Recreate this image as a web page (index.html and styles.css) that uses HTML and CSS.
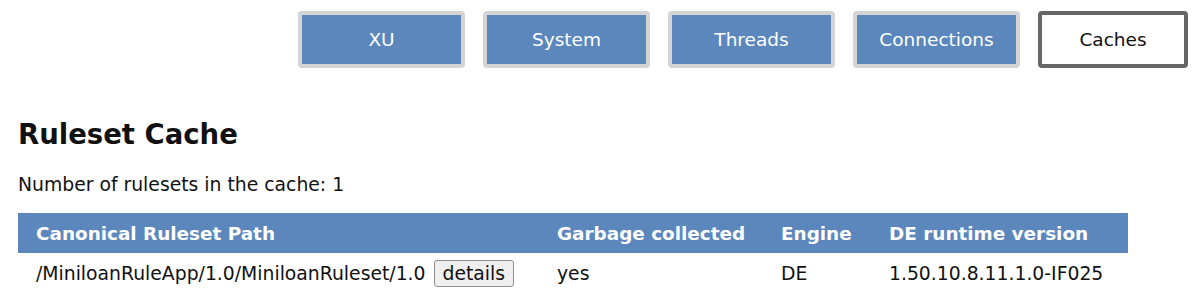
FILE: index.html
```html
<!DOCTYPE html>
<html lang="en">
<head>
  <meta charset="UTF-8">
  <title>Caches</title>
  <link rel="stylesheet" href="styles.css">
</head>
<body>

  <!-- Top tabs -->
  <div class="tabs">
    <a class="tab" href="#">XU</a>
    <a class="tab" href="#">System</a>
    <a class="tab" href="#">Threads</a>
    <a class="tab" href="#">Connections</a>
    <a class="tab active" href="#">Caches</a>
  </div>

  <h2>Ruleset Cache</h2>
  <p class="count">Number of rulesets in the cache: 1</p>

  <table class="cache">
    <thead>
      <tr>
        <th class="col-path">Canonical Ruleset Path</th>
        <th class="col-gc">Garbage collected</th>
        <th class="col-engine">Engine</th>
        <th class="col-version">DE runtime version</th>
      </tr>
    </thead>
    <tbody>
      <tr>
        <td>/MiniloanRuleApp/1.0/MiniloanRuleset/1.0 <button class="details">details</button></td>
        <td>yes</td>
        <td>DE</td>
        <td>1.50.10.8.11.1.0-IF025</td>
      </tr>
    </tbody>
  </table>

</body>
</html>
```

FILE: styles.css
```css
body {
  font-family: 'DejaVu Sans', Verdana, sans-serif;
  margin: 0;
  padding: 0 18px;
  color: #111;
  background: #fff;
}
.tabs {
  display: flex;
  justify-content: flex-end;
  gap: 18px;
  padding-top: 11px;
  margin-right: -6px;
}
.tab {
  box-sizing: border-box;
  width: 167px;
  height: 57px;
  display: flex;
  align-items: center;
  justify-content: center;
  background-color: #5b87bd;
  border: 4px solid #d4d4d4;
  border-radius: 4px;
  color: #fff;
  font-size: 18.5px;
  text-decoration: none;
}
.tab.active {
  width: 150px;
  background-color: #fff;
  border-color: #666;
  color: #111;
}
h2 {
  font-size: 27.5px;
  line-height: 32px;
  margin: 50px 0 0;
}
.count {
  font-size: 18.8px;
  line-height: 22px;
  margin: 24px 0 0;
}
.cache {
  width: 1110px;
  border-collapse: collapse;
  table-layout: fixed;
  margin-top: 17px;
}
.cache th {
  background-color: #5b87bd;
  color: #fff;
  font-size: 18.4px;
  text-align: left;
  white-space: nowrap;
  height: 40px;
  padding: 0 18px;
}
.cache td {
  font-size: 18.8px;
  white-space: nowrap;
  height: 40px;
  padding: 0 18px;
}
.col-path { width: 485px; }
.col-gc { width: 188px; }
.col-engine { width: 72px; }
.details {
  font-family: inherit;
  font-size: 18.8px;
  padding: 2px 8px;
  margin-left: 2px;
  background: #efefef;
  border: 1px solid #8f8f8f;
  border-radius: 3px;
  color: #111;
}
```
